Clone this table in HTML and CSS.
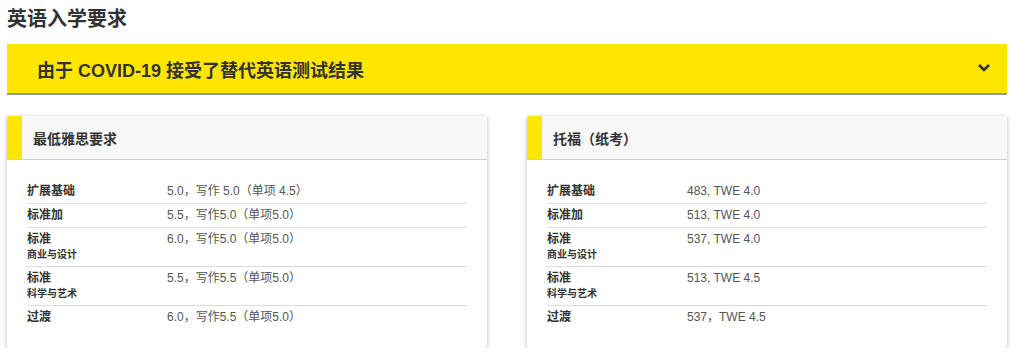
FILE: index.html
```html
<!DOCTYPE html>
<html lang="zh">
<head>
<meta charset="utf-8">
<link rel="stylesheet" href="styles.css">
</head>
<body>
<div class="page">
  <h2 class="title">英语入学要求</h2>
  <div class="banner">
    <span class="banner-text">由于 COVID-19 接受了替代英语测试结果</span>
    <svg class="chev" width="14" height="10" viewBox="0 0 14 10"><path d="M2 2 L7 7 L12 2" fill="none" stroke="#333" stroke-width="2.6"/></svg>
  </div>
  <div class="cards">
    <div class="card">
      <div class="card-head"><span class="strip"></span><span class="card-title">最低雅思要求</span></div>
      <div class="card-body">
        <div class="row"><div class="label">扩展基础</div><div class="value">5.0，写作 5.0（单项 4.5）</div></div>
        <div class="row"><div class="label">标准加</div><div class="value">5.5，写作5.0（单项5.0）</div></div>
        <div class="row"><div class="label">标准<div class="sub">商业与设计</div></div><div class="value">6.0，写作5.0（单项5.0）</div></div>
        <div class="row"><div class="label">标准<div class="sub">科学与艺术</div></div><div class="value">5.5，写作5.5（单项5.0）</div></div>
        <div class="row"><div class="label">过渡</div><div class="value">6.0，写作5.5（单项5.0）</div></div>
      </div>
    </div>
    <div class="card">
      <div class="card-head"><span class="strip"></span><span class="card-title">托福（纸考）</span></div>
      <div class="card-body">
        <div class="row"><div class="label">扩展基础</div><div class="value">483, TWE 4.0</div></div>
        <div class="row"><div class="label">标准加</div><div class="value">513, TWE 4.0</div></div>
        <div class="row"><div class="label">标准<div class="sub">商业与设计</div></div><div class="value">537, TWE 4.0</div></div>
        <div class="row"><div class="label">标准<div class="sub">科学与艺术</div></div><div class="value">513, TWE 4.5</div></div>
        <div class="row"><div class="label">过渡</div><div class="value">537，TWE 4.5</div></div>
      </div>
    </div>
  </div>
</div>
</body>
</html>
```
FILE: styles.css
```css
* { box-sizing: border-box; }
body {
  margin: 0;
  background: #fff;
  font-family: "Liberation Sans", "Noto Sans CJK SC", sans-serif;
  color: #333;
}
.page {
  width: 1000px;
  margin-left: 7px;
}
.title {
  margin: 0;
  padding-top: 5px;
  height: 44px;
  font-size: 20px;
  line-height: 28px;
  font-weight: 700;
  color: #333;
}
.banner {
  height: 51px;
  background: #ffe600;
  border-bottom: 2px solid #999;
  display: flex;
  align-items: center;
  justify-content: space-between;
  padding: 0 16px 0 30px;
}
.banner-text {
  font-size: 18px;
  font-weight: 700;
  color: #333;
}
.chev { display: block; margin-top: -2px; }
.cards {
  display: flex;
  gap: 40px;
  margin-top: 21px;
}
.card {
  width: 480px;
  background: #fff;
  border-radius: 3px;
  box-shadow: 0 1px 4px rgba(0,0,0,0.28);
  overflow: hidden;
}
.card-head {
  height: 44px;
  background: #f8f8f8;
  border-bottom: 1px solid #cfcfcf;
  display: flex;
  align-items: center;
}
.strip {
  width: 15px;
  align-self: stretch;
  background: #ffe600;
}
.card-title {
  margin-left: 11px;
  font-size: 14px;
  font-weight: 700;
  color: #333;
}
.card-body {
  padding: 20px 20px 19px;
}
.row {
  display: flex;
  border-bottom: 1px solid #ddd;
  font-size: 12px;
}
.row:last-child { border-bottom: none; }
.label {
  width: 140px;
  line-height: 23px;
  font-weight: 700;
  color: #333;
}
.sub {
  font-size: 10px;
  line-height: 12px;
  margin-top: -2px;
  padding-bottom: 5px;
}
.value {
  line-height: 23px;
  color: #555;
}
```
